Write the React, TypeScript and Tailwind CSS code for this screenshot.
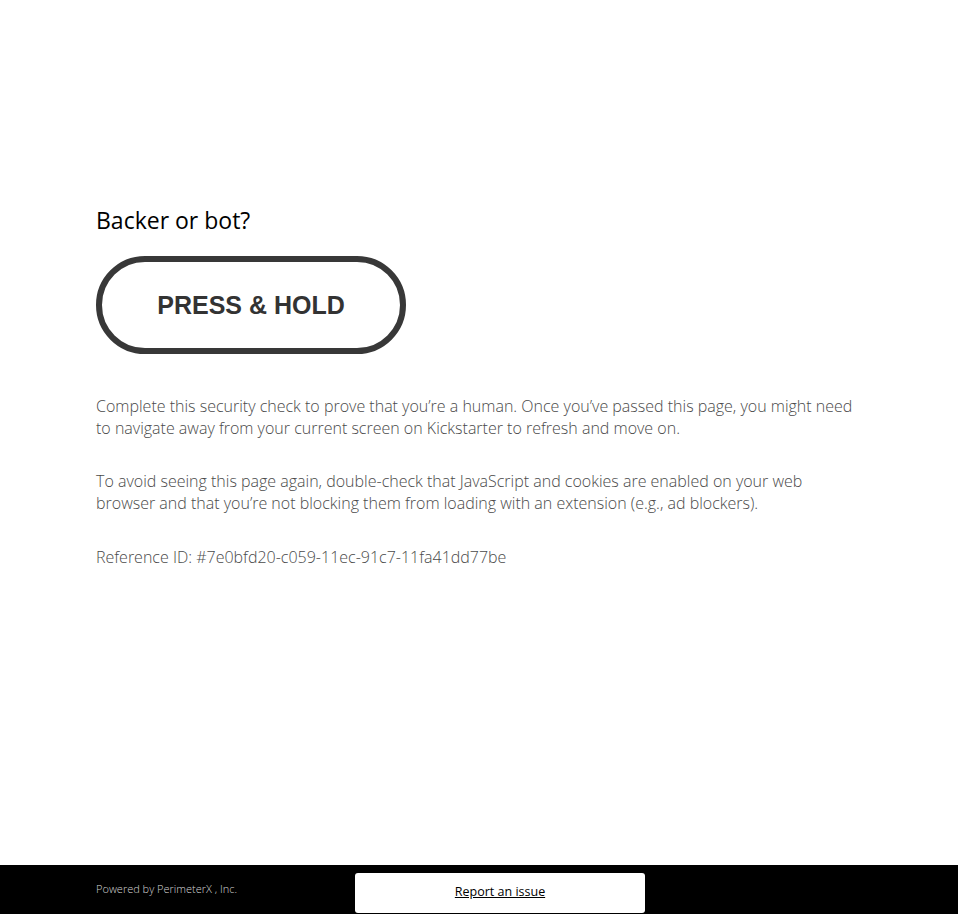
export default function App() {
  return (
    <div className="min-h-screen flex flex-col bg-white" style={{ fontFamily: '"Open Sans", "Liberation Sans", sans-serif' }}>
      <main className="flex-1 px-[96px] pt-[204px]">
        <h1 className="text-[23px] leading-[32px] text-black">Backer or bot?</h1>

        <div className="mt-[20px] w-[310px] h-[98px] rounded-full border-[6px] border-[#383838] flex items-center justify-center">
          <span
            className="text-[25px] font-bold text-[#333333] pt-[1px]"
            style={{ fontFamily: '"Liberation Sans", Arial, sans-serif' }}
          >
            PRESS &amp; HOLD
          </span>
        </div>

        <div className="mt-[41px] max-w-[766px] text-[16px] leading-[22px] font-light text-[#4a4a4a]">
          <p>
            Complete this security check to prove that you’re a human. Once you’ve passed this page, you might need
            to navigate away from your current screen on Kickstarter to refresh and move on.
          </p>
          <p className="mt-[31px]">
            To avoid seeing this page again, double-check that JavaScript and cookies are enabled on your web
            browser and that you’re not blocking them from loading with an extension (e.g., ad blockers).
          </p>
          <p className="mt-[32px]">Reference ID: #7e0bfd20-c059-11ec-91c7-11fa41dd77be</p>
        </div>
      </main>

      <footer className="h-[49px] bg-black flex items-center pl-[96px]">
        <div className="w-[259px] text-[11px] text-[#d4d4d4] font-light">Powered by PerimeterX , Inc.</div>
        <a
          href="#"
          className="mt-[6px] w-[290px] h-[40px] bg-white rounded-[3px] flex items-center justify-center text-[12.5px] text-black underline"
        >
          Report an issue
        </a>
      </footer>
    </div>
  );
}
